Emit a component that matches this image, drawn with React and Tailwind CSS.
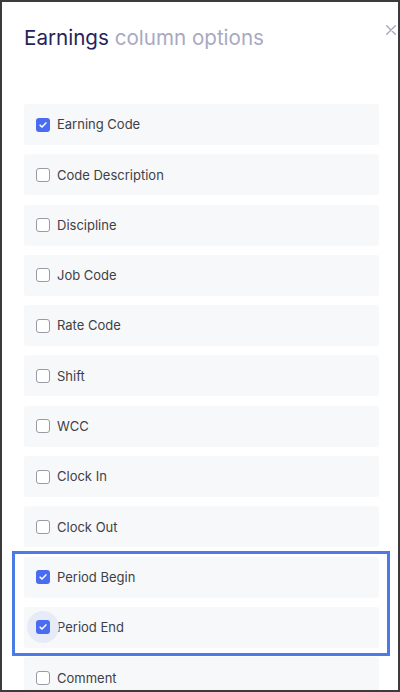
import React, { useState } from 'react';

const COLUMNS = [
  { label: 'Earning Code', checked: true },
  { label: 'Code Description', checked: false },
  { label: 'Discipline', checked: false },
  { label: 'Job Code', checked: false },
  { label: 'Rate Code', checked: false },
  { label: 'Shift', checked: false },
  { label: 'WCC', checked: false },
  { label: 'Clock In', checked: false },
  { label: 'Clock Out', checked: false },
  { label: 'Period Begin', checked: true },
  { label: 'Period End', checked: true, focused: true },
  { label: 'Comment', checked: false },
];

const Checkbox = ({ checked, focused }) => (
  <span className="relative flex h-[14px] w-[14px] shrink-0 items-center justify-center">
    {focused && (
      <span className="absolute left-1/2 top-1/2 h-[32px] w-[32px] -translate-x-1/2 -translate-y-1/2 rounded-full bg-[#e6ebf7]" />
    )}
    {checked ? (
      <span className="relative flex h-[14px] w-[14px] items-center justify-center rounded-[3px] bg-[#4a6cf0]">
        <svg viewBox="0 0 12 12" className="h-[10px] w-[10px]" fill="none" stroke="white" strokeWidth="1.8" strokeLinecap="round" strokeLinejoin="round">
          <path d="M2.5 6.2l2.3 2.3 4.7-5" />
        </svg>
      </span>
    ) : (
      <span className="relative h-[14px] w-[14px] rounded-[3px] border-[1.5px] border-[#9a9aa6] bg-white" />
    )}
  </span>
);

export default function App() {
  const [columns, setColumns] = useState(COLUMNS);

  const toggle = (index) => {
    setColumns(columns.map((c, i) => (i === index ? { ...c, checked: !c.checked } : c)));
  };

  return (
    <div className="relative h-[692px] w-[400px] overflow-hidden border-2 border-[#3b3b3b] bg-white font-['Inter',sans-serif]">
      {/* Header */}
      <div className="flex items-center px-[22px] pt-[22px]">
        <h2 className="text-[20.6px] leading-[28px]">
          <span className="text-[#25245a]">Earnings</span>{' '}
          <span className="text-[#a9a9c2]">column options</span>
        </h2>
      </div>
      <button className="absolute right-[2px] top-[23px] text-[#a6a6b6]">
        <svg viewBox="0 0 10 10" className="h-[10px] w-[10px]" fill="none" stroke="currentColor" strokeWidth="1.3" strokeLinecap="round">
          <path d="M0.7 0.7l8.6 8.6M9.3 0.7l-8.6 8.6" />
        </svg>
      </button>

      {/* Column list */}
      <div className="mt-[52px] flex flex-col gap-[9.3px] pl-[22px] pr-[19px]">
        {columns.map((col, i) => (
          <button
            key={col.label}
            onClick={() => toggle(i)}
            className="flex h-[41px] w-full items-center gap-[7px] rounded-[3px] bg-[#f7f8fa] pl-[12px] text-left"
          >
            <Checkbox checked={col.checked} focused={col.focused} />
            <span className="pt-[1px] text-[13px] text-[#3f3f46]">{col.label}</span>
          </button>
        ))}
      </div>

      {/* Highlight box */}
      <div className="pointer-events-none absolute left-[10px] top-[549px] h-[105px] w-[378px] border-[3px] border-[#4c7be6]" />
    </div>
  );
}
